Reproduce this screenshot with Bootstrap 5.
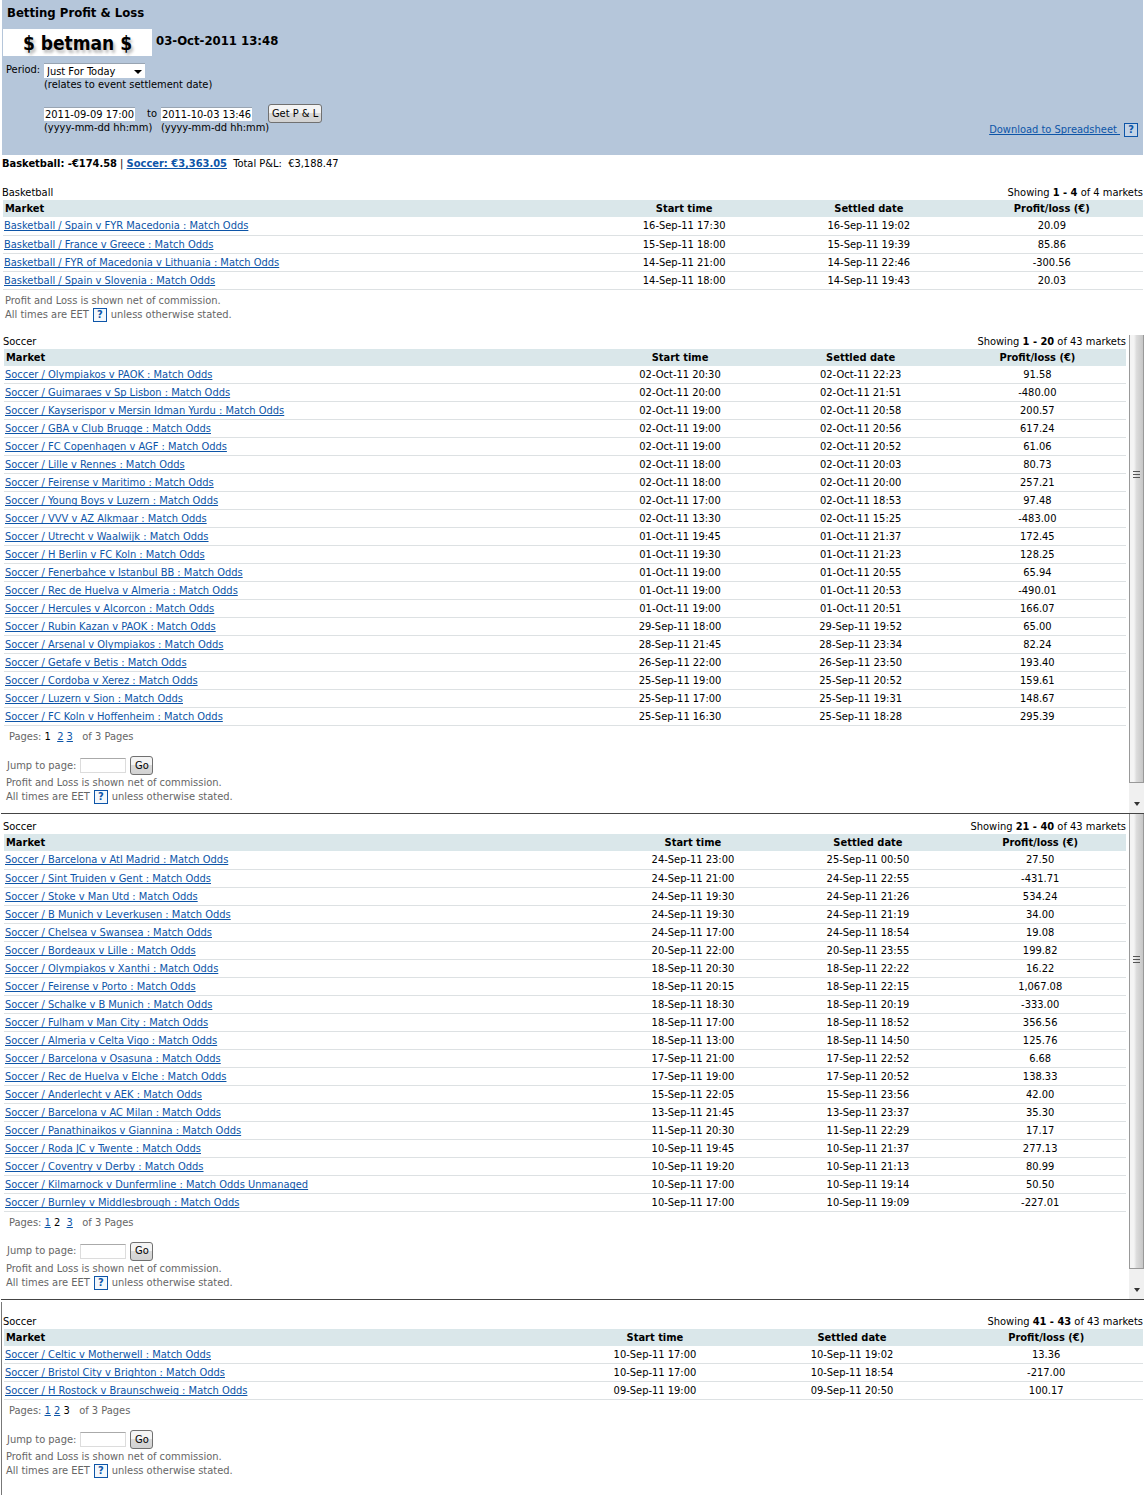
<!DOCTYPE html>
<html lang="en">
<head>
<meta charset="utf-8">
<meta name="viewport" content="width=device-width, initial-scale=1">
<title>Betting Profit &amp; Loss</title>
<link href="https://cdn.jsdelivr.net/npm/bootstrap@5.3.0/dist/css/bootstrap.min.css" rel="stylesheet">
<style>
body{font-family:"DejaVu Sans Condensed","DejaVu Sans",Tahoma,sans-serif;font-size:11px;line-height:14px;color:#000;background:#fff}
a{color:#0d55a8;text-decoration:underline;text-decoration-skip-ink:none}
.pl-head{background:#b5c6da;margin:0 3px 0 2px;padding:5px 5px 18px 1px}
.pl-head form{margin-bottom:2px}
.pl-head .pl-help{background:#c3d3e6}
.pl-title{font-size:13px;line-height:16px;font-weight:700;margin:0 0 8px 4px}
.pl-id{margin-bottom:7px}
.pl-brand{background:#fff;width:149px;height:27px;font-size:19px;line-height:28px;font-weight:700;text-align:center;text-shadow:2px 3px 3px #bbb}
.pl-date{font-size:13px;font-weight:700;line-height:20px;padding-bottom:3px}
.pl-label{width:41px;padding-left:3px;flex:none}
.pl-field{height:14px;line-height:13px;border:0;border-top:1px solid #98a4b2;padding:0 0 0 1px;background:#fff;color:#000;border-radius:0;font-size:11px;display:block}
.pl-select{width:101px;height:15px;padding-left:3px;appearance:none}
.pl-pick{width:101px}
.pl-arrow{right:3px;top:7px;pointer-events:none}
.pl-range{margin-top:12px}
.pl-range>.pl-col,.pl-range>label{padding-top:3px}
.pl-when{width:91px}
.pl-col{width:103px}
.pl-btn{font-size:11px;line-height:14px;height:19px;padding:1px 3px;color:#000;border:1px solid #707070;border-radius:3px;background:linear-gradient(#f4f4f4 45%,#dadada 50%,#d2d2d2);white-space:nowrap}
.pl-help{display:inline-block;width:14px;height:14px;border:1px solid #0d55a8;background:#f4f8fc;font-weight:700;line-height:12px;text-align:center;text-decoration:none}
.pl-sum{padding:2px 2px 1px;margin-bottom:14px}
.pl-panel{padding:0 3px}
.pl-pane{border-bottom:1px solid #444;margin:0 2px 0 1px}
.pl-pane .pl-panel{padding-bottom:9px}
.pl-first{margin-top:13px}
.pl-next .pl-panel{padding-top:6px}
.pl-cap{margin-left:-1px}
.pl-table{--bs-table-bg:transparent;table-layout:fixed;margin:0;color:#000;border-color:#dde1e3}
.pl-table>:not(caption)>*>*{padding:0 1px;line-height:17px;height:18px;text-align:center;border-bottom-width:1px;white-space:nowrap}
.pl-table>thead>tr>th{background:#dae7ea;border:0;height:17px}
.pl-table>:not(caption)>*>:first-child{text-align:left}
.pl-table th:first-child{padding-left:2px}
.pl-muted{color:#666}
.pl-pages{margin:4px 0 12px 5px;line-height:14px}
.pl-pages b{font-weight:400;color:#000}
.pl-jump{padding-left:3px;margin-bottom:1px}
.pl-box{width:46px;height:15px;border:1px solid #dcdcdc;border-top-color:#aaa;padding:0 2px;border-radius:0}
.pl-go{width:23px;padding:1px 2px}
.pl-note{padding-left:2px}
.pl-bar{width:15px;flex:none;background:#f0f0f0}
.pl-thumb{border:1px solid #999;border-top:0;background:linear-gradient(90deg,#f4f4f4 30%,#dcdcdc 50%,#c6c6c6);padding:135px 0 0 3px}
.pl-next .pl-thumb{padding-top:141px}
.pl-down{height:30px;padding:19px 0 0 5px}
.pl-last{border-left:1px solid #777;margin:2px 0 0 1px;padding:13px 3px 17px 2px}
.k1{width:51.6%}.k2{width:16.3%}.k3{width:16.1%}.k4{width:16%}
.m1{width:52%}.m2{width:16.5%}.m3{width:15.7%}.m4{width:15.8%}
.n1{width:53.5%}.n2{width:15.8%}.n3{width:15.4%}.n4{width:15.3%}
.o1{width:48.4%}.o2{width:17.5%}.o3{width:17.1%}.o4{width:17%}
svg{display:block}
</style>
<script src="https://cdn.jsdelivr.net/npm/bootstrap@5.3.0/dist/js/bootstrap.bundle.min.js" defer></script>
</head>
<body>
<header class="pl-head d-flex justify-content-between align-items-end">
<form>
<h1 class="pl-title">Betting Profit &amp; Loss</h1>
<div class="pl-id d-flex align-items-center gap-1"><div class="pl-brand">$ betman $</div><span class="pl-date">03-Oct-2011 13:48</span></div>
<div class="d-flex"><label class="pl-label" for="period">Period:</label>
<div><div class="pl-pick position-relative"><select id="period" class="pl-field pl-select"><option>Just For Today</option></select><svg class="pl-arrow position-absolute" width="8" height="4" viewBox="0 0 8 4"><path d="M0 0h8L4 4z"/></svg></div>
<div>(relates to event settlement date)</div></div></div>
<div class="pl-range d-flex align-items-start"><div class="pl-label"></div>
<div class="pl-col"><input class="pl-field pl-when" type="text" value="2011-09-09 17:00" aria-label="From"><span class="text-nowrap">(yyyy-mm-dd hh:mm)</span></div>
<label class="me-1" for="until">to</label>
<div class="pl-col"><input id="until" class="pl-field pl-when" type="text" value="2011-10-03 13:46"><span class="text-nowrap">(yyyy-mm-dd hh:mm)</span></div>
<button type="button" class="pl-btn ms-1">Get P &amp; L</button></div>
</form>
<div class="d-flex gap-1"><a href="#">Download to Spreadsheet&nbsp;</a><a class="pl-help" href="#">?</a></div>
</header>
<main>
<div class="pl-sum"><b>Basketball: -€174.58</b> | <a class="fw-bold" href="#soccer">Soccer: €3,363.05</a>&nbsp; Total P&amp;L:&nbsp; €3,188.47</div>

<section class="pl-panel">
<div class="pl-cap d-flex justify-content-between"><span>Basketball</span><span>Showing <b>1 - 4</b> of 4 markets</span></div>
<table class="table pl-table"><colgroup><col class="k1"><col class="k2"><col class="k3"><col class="k4"></colgroup>
<thead><tr><th>Market</th><th>Start time</th><th>Settled date</th><th>Profit/loss (€)</th></tr></thead>
<tbody>
<tr><td><a href="#">Basketball / Spain v FYR Macedonia : Match Odds</a></td><td>16-Sep-11 17:30</td><td>16-Sep-11 19:02</td><td>20.09</td></tr>
<tr><td><a href="#">Basketball / France v Greece : Match Odds</a></td><td>15-Sep-11 18:00</td><td>15-Sep-11 19:39</td><td>85.86</td></tr>
<tr><td><a href="#">Basketball / FYR of Macedonia v Lithuania : Match Odds</a></td><td>14-Sep-11 21:00</td><td>14-Sep-11 22:46</td><td>-300.56</td></tr>
<tr><td><a href="#">Basketball / Spain v Slovenia : Match Odds</a></td><td>14-Sep-11 18:00</td><td>14-Sep-11 19:43</td><td>20.03</td></tr>
</tbody></table>
<div class="pl-note pl-muted mt-1">Profit and Loss is shown net of commission.<div class="d-flex gap-1"><span>All times are EET</span><a class="pl-help" href="#">?</a><span>unless otherwise stated.</span></div></div>
</section>

<section id="soccer" class="pl-pane pl-first d-flex">
<div class="pl-panel flex-grow-1">
<div class="pl-cap d-flex justify-content-between"><span>Soccer</span><span>Showing <b>1 - 20</b> of 43 markets</span></div>
<table class="table pl-table"><colgroup><col class="m1"><col class="m2"><col class="m3"><col class="m4"></colgroup>
<thead><tr><th>Market</th><th>Start time</th><th>Settled date</th><th>Profit/loss (€)</th></tr></thead>
<tbody>
<tr><td><a href="#">Soccer / Olympiakos v PAOK : Match Odds</a></td><td>02-Oct-11 20:30</td><td>02-Oct-11 22:23</td><td>91.58</td></tr>
<tr><td><a href="#">Soccer / Guimaraes v Sp Lisbon : Match Odds</a></td><td>02-Oct-11 20:00</td><td>02-Oct-11 21:51</td><td>-480.00</td></tr>
<tr><td><a href="#">Soccer / Kayserispor v Mersin Idman Yurdu : Match Odds</a></td><td>02-Oct-11 19:00</td><td>02-Oct-11 20:58</td><td>200.57</td></tr>
<tr><td><a href="#">Soccer / GBA v Club Brugge : Match Odds</a></td><td>02-Oct-11 19:00</td><td>02-Oct-11 20:56</td><td>617.24</td></tr>
<tr><td><a href="#">Soccer / FC Copenhagen v AGF : Match Odds</a></td><td>02-Oct-11 19:00</td><td>02-Oct-11 20:52</td><td>61.06</td></tr>
<tr><td><a href="#">Soccer / Lille v Rennes : Match Odds</a></td><td>02-Oct-11 18:00</td><td>02-Oct-11 20:03</td><td>80.73</td></tr>
<tr><td><a href="#">Soccer / Feirense v Maritimo : Match Odds</a></td><td>02-Oct-11 18:00</td><td>02-Oct-11 20:00</td><td>257.21</td></tr>
<tr><td><a href="#">Soccer / Young Boys v Luzern : Match Odds</a></td><td>02-Oct-11 17:00</td><td>02-Oct-11 18:53</td><td>97.48</td></tr>
<tr><td><a href="#">Soccer / VVV v AZ Alkmaar : Match Odds</a></td><td>02-Oct-11 13:30</td><td>02-Oct-11 15:25</td><td>-483.00</td></tr>
<tr><td><a href="#">Soccer / Utrecht v Waalwijk : Match Odds</a></td><td>01-Oct-11 19:45</td><td>01-Oct-11 21:37</td><td>172.45</td></tr>
<tr><td><a href="#">Soccer / H Berlin v FC Koln : Match Odds</a></td><td>01-Oct-11 19:30</td><td>01-Oct-11 21:23</td><td>128.25</td></tr>
<tr><td><a href="#">Soccer / Fenerbahce v Istanbul BB : Match Odds</a></td><td>01-Oct-11 19:00</td><td>01-Oct-11 20:55</td><td>65.94</td></tr>
<tr><td><a href="#">Soccer / Rec de Huelva v Almeria : Match Odds</a></td><td>01-Oct-11 19:00</td><td>01-Oct-11 20:53</td><td>-490.01</td></tr>
<tr><td><a href="#">Soccer / Hercules v Alcorcon : Match Odds</a></td><td>01-Oct-11 19:00</td><td>01-Oct-11 20:51</td><td>166.07</td></tr>
<tr><td><a href="#">Soccer / Rubin Kazan v PAOK : Match Odds</a></td><td>29-Sep-11 18:00</td><td>29-Sep-11 19:52</td><td>65.00</td></tr>
<tr><td><a href="#">Soccer / Arsenal v Olympiakos : Match Odds</a></td><td>28-Sep-11 21:45</td><td>28-Sep-11 23:34</td><td>82.24</td></tr>
<tr><td><a href="#">Soccer / Getafe v Betis : Match Odds</a></td><td>26-Sep-11 22:00</td><td>26-Sep-11 23:50</td><td>193.40</td></tr>
<tr><td><a href="#">Soccer / Cordoba v Xerez : Match Odds</a></td><td>25-Sep-11 19:00</td><td>25-Sep-11 20:52</td><td>159.61</td></tr>
<tr><td><a href="#">Soccer / Luzern v Sion : Match Odds</a></td><td>25-Sep-11 17:00</td><td>25-Sep-11 19:31</td><td>148.67</td></tr>
<tr><td><a href="#">Soccer / FC Koln v Hoffenheim : Match Odds</a></td><td>25-Sep-11 16:30</td><td>25-Sep-11 18:28</td><td>295.39</td></tr>
</tbody></table>
<div class="pl-pages pl-muted">Pages: <b>1</b>&nbsp; <a href="#">2</a> <a href="#">3</a>&nbsp;&nbsp; of 3 Pages</div>
<div class="pl-jump pl-muted d-flex align-items-center gap-1"><label for="jump1">Jump to page:</label><input id="jump1" class="pl-box" type="text"><button type="button" class="pl-btn pl-go">Go</button></div>
<div class="pl-note pl-muted">Profit and Loss is shown net of commission.<div class="d-flex gap-1"><span>All times are EET</span><a class="pl-help" href="#">?</a><span>unless otherwise stated.</span></div></div>
</div>
<div class="pl-bar d-flex flex-column" aria-hidden="true"><div class="pl-thumb flex-grow-1"><svg width="7" height="8" viewBox="0 0 7 8"><path d="M0 1.500h7M0 4.500h7M0 7.500h7" stroke="#555"/></svg></div><div class="pl-down"><svg width="6" height="4" viewBox="0 0 6 4"><path d="M0 0h6L3 4z" fill="#333"/></svg></div></div>
</section>

<section class="pl-pane pl-next d-flex">
<div class="pl-panel flex-grow-1">
<div class="pl-cap d-flex justify-content-between"><span>Soccer</span><span>Showing <b>21 - 40</b> of 43 markets</span></div>
<table class="table pl-table"><colgroup><col class="n1"><col class="n2"><col class="n3"><col class="n4"></colgroup>
<thead><tr><th>Market</th><th>Start time</th><th>Settled date</th><th>Profit/loss (€)</th></tr></thead>
<tbody>
<tr><td><a href="#">Soccer / Barcelona v Atl Madrid : Match Odds</a></td><td>24-Sep-11 23:00</td><td>25-Sep-11 00:50</td><td>27.50</td></tr>
<tr><td><a href="#">Soccer / Sint Truiden v Gent : Match Odds</a></td><td>24-Sep-11 21:00</td><td>24-Sep-11 22:55</td><td>-431.71</td></tr>
<tr><td><a href="#">Soccer / Stoke v Man Utd : Match Odds</a></td><td>24-Sep-11 19:30</td><td>24-Sep-11 21:26</td><td>534.24</td></tr>
<tr><td><a href="#">Soccer / B Munich v Leverkusen : Match Odds</a></td><td>24-Sep-11 19:30</td><td>24-Sep-11 21:19</td><td>34.00</td></tr>
<tr><td><a href="#">Soccer / Chelsea v Swansea : Match Odds</a></td><td>24-Sep-11 17:00</td><td>24-Sep-11 18:54</td><td>19.08</td></tr>
<tr><td><a href="#">Soccer / Bordeaux v Lille : Match Odds</a></td><td>20-Sep-11 22:00</td><td>20-Sep-11 23:55</td><td>199.82</td></tr>
<tr><td><a href="#">Soccer / Olympiakos v Xanthi : Match Odds</a></td><td>18-Sep-11 20:30</td><td>18-Sep-11 22:22</td><td>16.22</td></tr>
<tr><td><a href="#">Soccer / Feirense v Porto : Match Odds</a></td><td>18-Sep-11 20:15</td><td>18-Sep-11 22:15</td><td>1,067.08</td></tr>
<tr><td><a href="#">Soccer / Schalke v B Munich : Match Odds</a></td><td>18-Sep-11 18:30</td><td>18-Sep-11 20:19</td><td>-333.00</td></tr>
<tr><td><a href="#">Soccer / Fulham v Man City : Match Odds</a></td><td>18-Sep-11 17:00</td><td>18-Sep-11 18:52</td><td>356.56</td></tr>
<tr><td><a href="#">Soccer / Almeria v Celta Vigo : Match Odds</a></td><td>18-Sep-11 13:00</td><td>18-Sep-11 14:50</td><td>125.76</td></tr>
<tr><td><a href="#">Soccer / Barcelona v Osasuna : Match Odds</a></td><td>17-Sep-11 21:00</td><td>17-Sep-11 22:52</td><td>6.68</td></tr>
<tr><td><a href="#">Soccer / Rec de Huelva v Elche : Match Odds</a></td><td>17-Sep-11 19:00</td><td>17-Sep-11 20:52</td><td>138.33</td></tr>
<tr><td><a href="#">Soccer / Anderlecht v AEK : Match Odds</a></td><td>15-Sep-11 22:05</td><td>15-Sep-11 23:56</td><td>42.00</td></tr>
<tr><td><a href="#">Soccer / Barcelona v AC Milan : Match Odds</a></td><td>13-Sep-11 21:45</td><td>13-Sep-11 23:37</td><td>35.30</td></tr>
<tr><td><a href="#">Soccer / Panathinaikos v Giannina : Match Odds</a></td><td>11-Sep-11 20:30</td><td>11-Sep-11 22:29</td><td>17.17</td></tr>
<tr><td><a href="#">Soccer / Roda JC v Twente : Match Odds</a></td><td>10-Sep-11 19:45</td><td>10-Sep-11 21:37</td><td>277.13</td></tr>
<tr><td><a href="#">Soccer / Coventry v Derby : Match Odds</a></td><td>10-Sep-11 19:20</td><td>10-Sep-11 21:13</td><td>80.99</td></tr>
<tr><td><a href="#">Soccer / Kilmarnock v Dunfermline : Match Odds Unmanaged</a></td><td>10-Sep-11 17:00</td><td>10-Sep-11 19:14</td><td>50.50</td></tr>
<tr><td><a href="#">Soccer / Burnley v Middlesbrough : Match Odds</a></td><td>10-Sep-11 17:00</td><td>10-Sep-11 19:09</td><td>-227.01</td></tr>
</tbody></table>
<div class="pl-pages pl-muted">Pages: <a href="#">1</a> <b>2</b>&nbsp; <a href="#">3</a>&nbsp;&nbsp; of 3 Pages</div>
<div class="pl-jump pl-muted d-flex align-items-center gap-1"><label for="jump2">Jump to page:</label><input id="jump2" class="pl-box" type="text"><button type="button" class="pl-btn pl-go">Go</button></div>
<div class="pl-note pl-muted">Profit and Loss is shown net of commission.<div class="d-flex gap-1"><span>All times are EET</span><a class="pl-help" href="#">?</a><span>unless otherwise stated.</span></div></div>
</div>
<div class="pl-bar d-flex flex-column" aria-hidden="true"><div class="pl-thumb flex-grow-1"><svg width="7" height="8" viewBox="0 0 7 8"><path d="M0 1.500h7M0 4.500h7M0 7.500h7" stroke="#555"/></svg></div><div class="pl-down"><svg width="6" height="4" viewBox="0 0 6 4"><path d="M0 0h6L3 4z" fill="#333"/></svg></div></div>
</section>

<section class="pl-last">
<div class="pl-cap d-flex justify-content-between"><span>Soccer</span><span>Showing <b>41 - 43</b> of 43 markets</span></div>
<table class="table pl-table"><colgroup><col class="o1"><col class="o2"><col class="o3"><col class="o4"></colgroup>
<thead><tr><th>Market</th><th>Start time</th><th>Settled date</th><th>Profit/loss (€)</th></tr></thead>
<tbody>
<tr><td><a href="#">Soccer / Celtic v Motherwell : Match Odds</a></td><td>10-Sep-11 17:00</td><td>10-Sep-11 19:02</td><td>13.36</td></tr>
<tr><td><a href="#">Soccer / Bristol City v Brighton : Match Odds</a></td><td>10-Sep-11 17:00</td><td>10-Sep-11 18:54</td><td>-217.00</td></tr>
<tr><td><a href="#">Soccer / H Rostock v Braunschweig : Match Odds</a></td><td>09-Sep-11 19:00</td><td>09-Sep-11 20:50</td><td>100.17</td></tr>
</tbody></table>
<div class="pl-pages pl-muted">Pages: <a href="#">1</a> <a href="#">2</a> <b>3</b>&nbsp;&nbsp; of 3 Pages</div>
<div class="pl-jump pl-muted d-flex align-items-center gap-1"><label for="jump3">Jump to page:</label><input id="jump3" class="pl-box" type="text"><button type="button" class="pl-btn pl-go">Go</button></div>
<div class="pl-note pl-muted">Profit and Loss is shown net of commission.<div class="d-flex gap-1"><span>All times are EET</span><a class="pl-help" href="#">?</a><span>unless otherwise stated.</span></div></div>
</section>
</main>
</body>
</html>
